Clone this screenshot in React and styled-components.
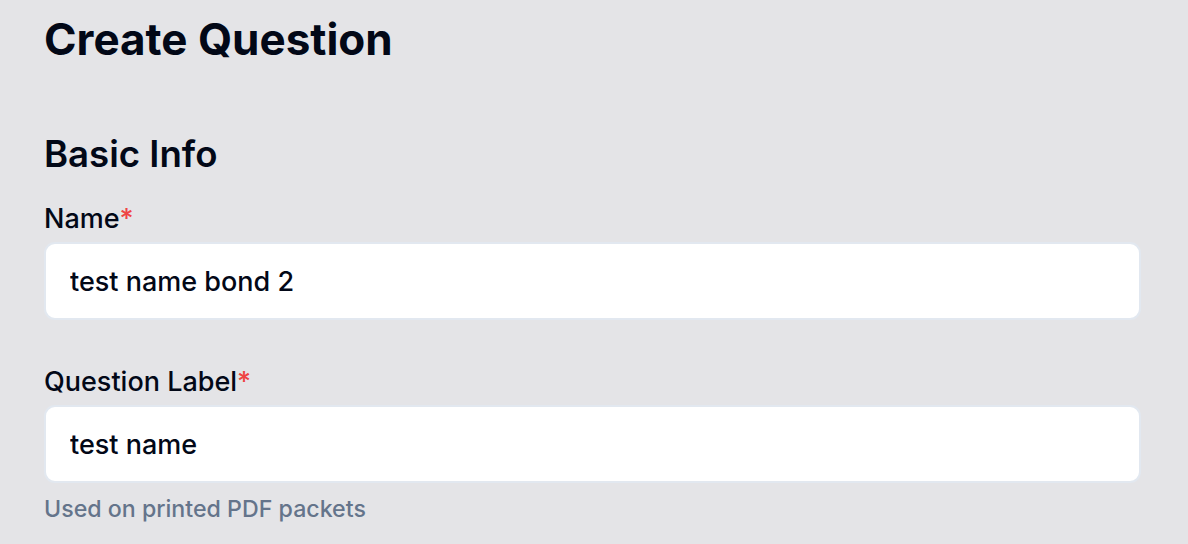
import React from 'react'
import styled, { createGlobalStyle } from 'styled-components'

const GlobalStyle = createGlobalStyle`
    html, body {
        margin: 0;
        padding: 0;
        background: #e4e4e7;
    }
    body {
        font-family: Inter, "Noto Sans", sans-serif;
        color: #020817;
    }
`;

const Page = styled.div`
    display: flex;
    flex-direction: column;
    padding: 11px 47px 0 44px;
    height: 544px;
    box-sizing: border-box;
    overflow: hidden;
`;

const Title = styled.h1`
    margin: 0;
    font-size: 44px;
    font-weight: 700;
    line-height: 56px;
`;

const SectionTitle = styled.h2`
    margin: 65px 0 0;
    font-size: 36.6px;
    font-weight: 600;
    line-height: 44px;
`;

const Field = styled.div`
    display: flex;
    flex-direction: column;
    margin-top: ${p => p.$first ? '25px' : '44px'};
`;

const Label = styled.label`
    font-size: 27px;
    font-weight: 500;
    line-height: 36px;
    margin-bottom: 5px;
`;

const Required = styled.span`
    color: #ef4444;
`;

const Input = styled.input`
    box-sizing: border-box;
    height: 78px;
    width: 100%;
    padding: 0 24px;
    border: 2px solid #e2e8f0;
    border-radius: 11px;
    background: #ffffff;
    font-family: inherit;
    font-size: 27px;
    font-weight: 500;
    color: #020817;
    outline: none;
`;

const Hint = styled.p`
    margin: 11px 0 0;
    font-size: 23.2px;
    font-weight: 500;
    line-height: 30px;
    color: #64748b;
`;

const App = () => {
    return (
        <>
            <GlobalStyle />
            <Page>
                <Title>Create Question</Title>
                <SectionTitle>Basic Info</SectionTitle>
                <Field $first>
                    <Label>Name<Required>*</Required></Label>
                    <Input defaultValue="test name bond 2" />
                </Field>
                <Field>
                    <Label>Question Label<Required>*</Required></Label>
                    <Input defaultValue="test name" />
                    <Hint>Used on printed PDF packets</Hint>
                </Field>
            </Page>
        </>
    )
}

export default App
